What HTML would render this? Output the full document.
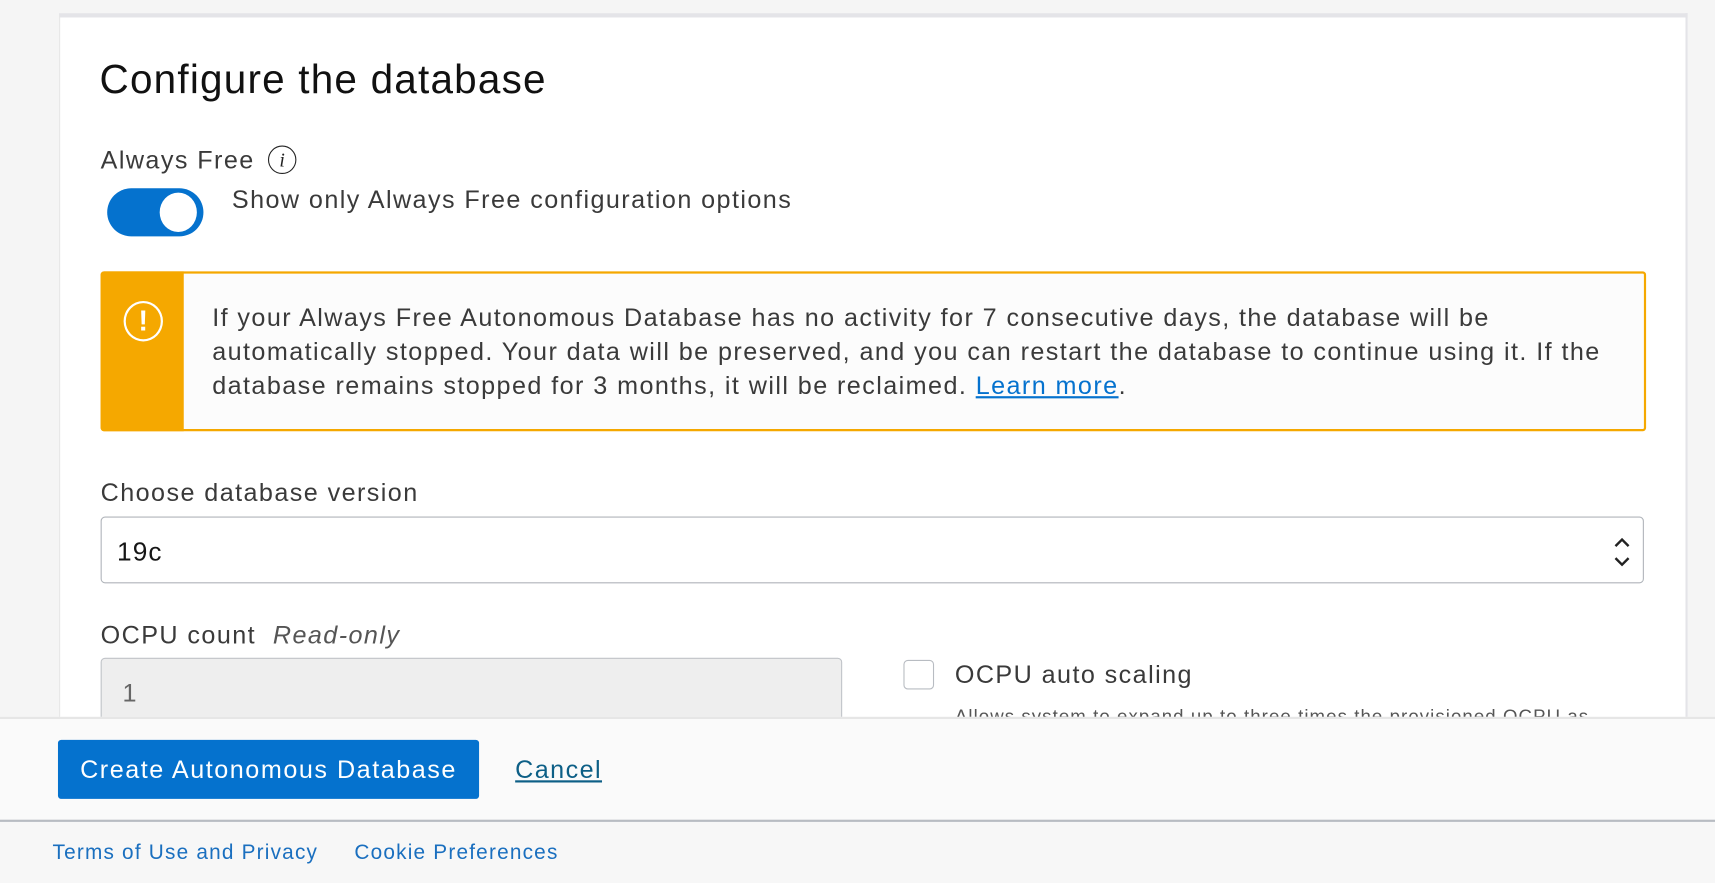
<!DOCTYPE html>
<html><head><meta charset="utf-8"><style>
html,body{margin:0;padding:0;width:1715px;height:881px;overflow:hidden;background:#f5f5f5;font-family:"Liberation Sans",Arial,sans-serif;}
#w{position:absolute;left:0;top:0;width:1568px;height:805px;transform:scale(1.09375,1.0944);transform-origin:0 0;}
.a{position:absolute;white-space:nowrap;}
.t{color:#3a3a3a;font-size:23px;letter-spacing:1.3px;}
</style></head><body><div id="w">
<div class="a" style="left:54px;top:12px;width:1486px;height:660px;background:#fff;border-top:4px solid #e4e4e8;border-left:1px solid #e6e6e6;border-right:2px solid #e4e4e8;"></div>
<div class="a" style="left:91px;top:52px;font-size:37px;color:#111;letter-spacing:1.1px;">Configure the database</div>
<div class="a t" style="left:92px;top:133px;">Always Free</div>
<div class="a" style="left:245px;top:133px;width:24px;height:24px;border:1.5px solid #222;border-radius:50%;text-align:center;font-family:'Liberation Serif',serif;font-style:italic;font-size:18px;line-height:24px;color:#222;">i</div>
<div class="a" style="left:98px;top:172px;width:88px;height:44px;border-radius:22px;background:#0572ce;"></div>
<div class="a" style="left:146px;top:176px;width:34px;height:36px;border-radius:50%;background:#fff;"></div>
<div class="a t" style="left:212px;top:169px;">Show only Always Free configuration options</div>
<div class="a" style="left:92px;top:248px;width:1409px;height:142px;border:2px solid #f5a800;border-radius:3px;background:#fcfcfc;"></div>
<div class="a" style="left:92px;top:248px;width:76px;height:146px;background:#f5a800;border-radius:3px 0 0 3px;"></div>
<div class="a" style="left:113px;top:275px;width:32px;height:33px;border:2.5px solid #fff;border-radius:50%;color:#fff;font-size:26px;font-weight:bold;text-align:center;line-height:33px;">!</div>
<div class="a t" style="left:194px;top:275px;line-height:31px;">If your Always Free Autonomous Database has no activity for 7 consecutive days, the database will be<br>automatically stopped. Your data will be preserved, and you can restart the database to continue using it. If the<br>database remains stopped for 3 months, it will be reclaimed. <span style="color:#0572ce;text-decoration:underline;">Learn more</span>.</div>
<div class="a t" style="left:92px;top:437px;">Choose database version</div>
<div class="a" style="left:92px;top:472px;width:1409px;height:59px;border:1.5px solid #b0b4ba;border-radius:4px;background:#fff;"></div>
<div class="a" style="left:107px;top:491px;font-size:24px;color:#161616;letter-spacing:1px;">19c</div>
<svg class="a" style="left:1474px;top:490px;" width="18" height="30" viewBox="0 0 18 30"><path d="M3 9 L9 3 L15 9 M3 20 L9 26 L15 20" fill="none" stroke="#222" stroke-width="2.2"/></svg>
<div class="a t" style="left:92px;top:567px;">OCPU count &nbsp;<i style="color:#555;">Read-only</i></div>
<div class="a" style="left:92px;top:601px;width:676px;height:70px;border:1.5px solid #c0c3c8;border-radius:4px;background:#eeeeee;"></div>
<div class="a" style="left:112px;top:620px;font-size:23px;color:#666;">1</div>
<div class="a" style="left:826px;top:603px;width:26px;height:25px;border:1.5px solid #b8bcc2;border-radius:4px;background:#fff;"></div>
<div class="a t" style="left:873px;top:603px;">OCPU auto scaling</div>
<div class="a" style="left:873px;top:645px;font-size:17px;color:#555;letter-spacing:1px;">Allows system to expand up to three times the provisioned OCPU as</div>
<div class="a" style="left:0;top:655px;width:1568px;height:94px;background:#fafafa;border-top:2px solid #e6e6e6;"></div>
<div class="a" style="left:53px;top:676px;width:385px;height:54px;background:#0572ce;border-radius:3px;color:#fff;font-size:23px;letter-spacing:1.4px;line-height:54px;text-align:center;">Create Autonomous Database</div>
<div class="a" style="left:471px;top:690px;font-size:23px;letter-spacing:1.3px;color:#0d5f86;text-decoration:underline;">Cancel</div>
<div class="a" style="left:0;top:749px;width:1568px;height:56px;background:#f7f7f7;border-top:2px solid #b8bcc2;"></div>
<div class="a" style="left:48px;top:769px;font-size:19px;letter-spacing:1.1px;color:#1a6fbf;">Terms of Use and Privacy</div>
<div class="a" style="left:324px;top:769px;font-size:19px;letter-spacing:1.1px;color:#1a6fbf;">Cookie Preferences</div>
</div></body></html>
